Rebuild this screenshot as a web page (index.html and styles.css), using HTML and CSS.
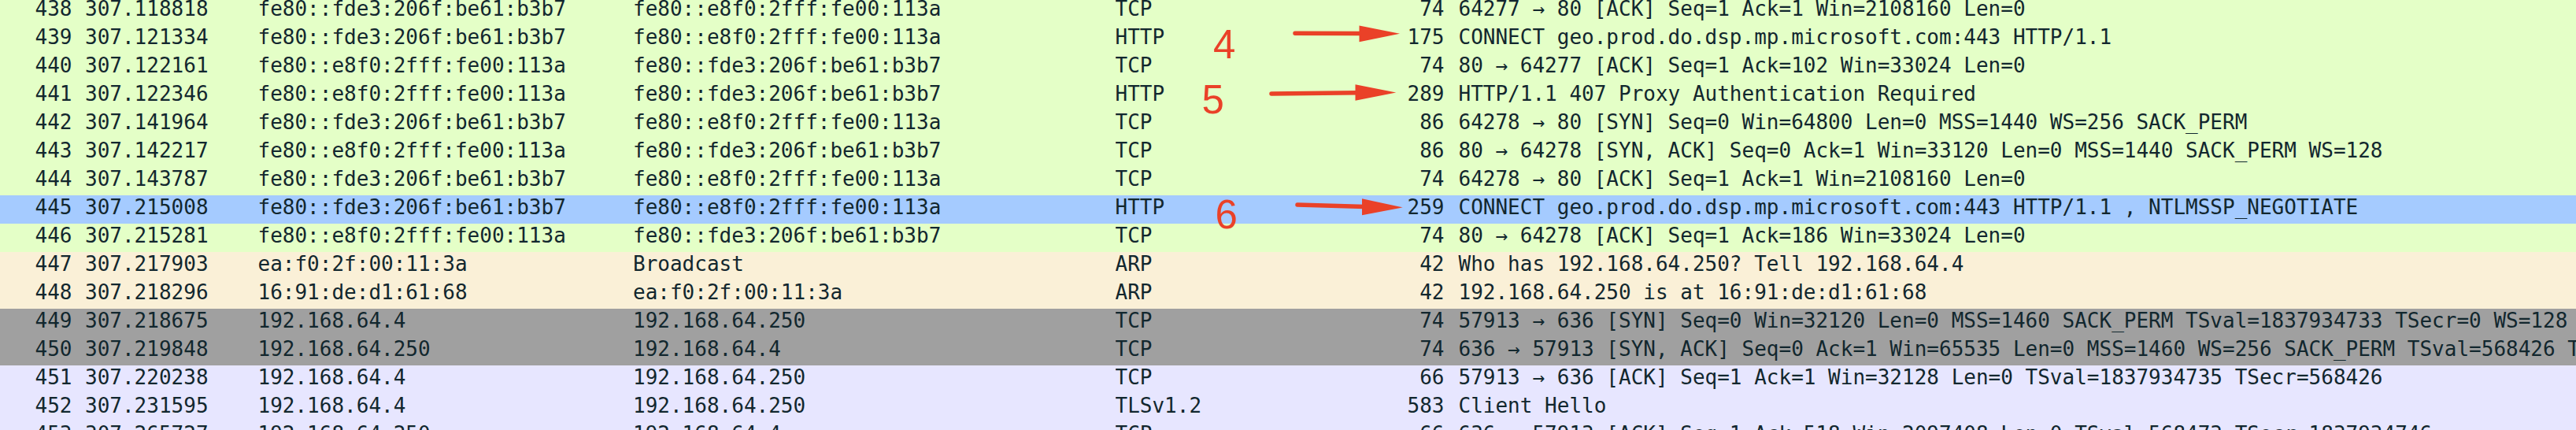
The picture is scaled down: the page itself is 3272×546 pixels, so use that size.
FILE: index.html
```html
<!DOCTYPE html>
<html lang="en">
<head>
<meta charset="utf-8">
<title>Packet list</title>
<link rel="stylesheet" href="styles.css">
</head>
<body>
<div class="capture">
  <div class="list">
    <div class="row c-http"><span class="no">438</span><span>307.118818</span><span>fe80::fde3:206f:be61:b3b7</span><span>fe80::e8f0:2fff:fe00:113a</span><span>TCP</span><span class="len">74</span><span class="info">64277 → 80 [ACK] Seq=1 Ack=1 Win=2108160 Len=0</span></div>
    <div class="row c-http"><span class="no">439</span><span>307.121334</span><span>fe80::fde3:206f:be61:b3b7</span><span>fe80::e8f0:2fff:fe00:113a</span><span>HTTP</span><span class="len">175</span><span class="info">CONNECT geo.prod.do.dsp.mp.microsoft.com:443 HTTP/1.1</span></div>
    <div class="row c-http"><span class="no">440</span><span>307.122161</span><span>fe80::e8f0:2fff:fe00:113a</span><span>fe80::fde3:206f:be61:b3b7</span><span>TCP</span><span class="len">74</span><span class="info">80 → 64277 [ACK] Seq=1 Ack=102 Win=33024 Len=0</span></div>
    <div class="row c-http"><span class="no">441</span><span>307.122346</span><span>fe80::e8f0:2fff:fe00:113a</span><span>fe80::fde3:206f:be61:b3b7</span><span>HTTP</span><span class="len">289</span><span class="info">HTTP/1.1 407 Proxy Authentication Required</span></div>
    <div class="row c-http"><span class="no">442</span><span>307.141964</span><span>fe80::fde3:206f:be61:b3b7</span><span>fe80::e8f0:2fff:fe00:113a</span><span>TCP</span><span class="len">86</span><span class="info">64278 → 80 [SYN] Seq=0 Win=64800 Len=0 MSS=1440 WS=256 SACK_PERM</span></div>
    <div class="row c-http"><span class="no">443</span><span>307.142217</span><span>fe80::e8f0:2fff:fe00:113a</span><span>fe80::fde3:206f:be61:b3b7</span><span>TCP</span><span class="len">86</span><span class="info">80 → 64278 [SYN, ACK] Seq=0 Ack=1 Win=33120 Len=0 MSS=1440 SACK_PERM WS=128</span></div>
    <div class="row c-http"><span class="no">444</span><span>307.143787</span><span>fe80::fde3:206f:be61:b3b7</span><span>fe80::e8f0:2fff:fe00:113a</span><span>TCP</span><span class="len">74</span><span class="info">64278 → 80 [ACK] Seq=1 Ack=1 Win=2108160 Len=0</span></div>
    <div class="row c-selected"><span class="no">445</span><span>307.215008</span><span>fe80::fde3:206f:be61:b3b7</span><span>fe80::e8f0:2fff:fe00:113a</span><span>HTTP</span><span class="len">259</span><span class="info">CONNECT geo.prod.do.dsp.mp.microsoft.com:443 HTTP/1.1 , NTLMSSP_NEGOTIATE</span></div>
    <div class="row c-http"><span class="no">446</span><span>307.215281</span><span>fe80::e8f0:2fff:fe00:113a</span><span>fe80::fde3:206f:be61:b3b7</span><span>TCP</span><span class="len">74</span><span class="info">80 → 64278 [ACK] Seq=1 Ack=186 Win=33024 Len=0</span></div>
    <div class="row c-arp"><span class="no">447</span><span>307.217903</span><span>ea:f0:2f:00:11:3a</span><span>Broadcast</span><span>ARP</span><span class="len">42</span><span class="info">Who has 192.168.64.250? Tell 192.168.64.4</span></div>
    <div class="row c-arp"><span class="no">448</span><span>307.218296</span><span>16:91:de:d1:61:68</span><span>ea:f0:2f:00:11:3a</span><span>ARP</span><span class="len">42</span><span class="info">192.168.64.250 is at 16:91:de:d1:61:68</span></div>
    <div class="row c-syn"><span class="no">449</span><span>307.218675</span><span>192.168.64.4</span><span>192.168.64.250</span><span>TCP</span><span class="len">74</span><span class="info">57913 → 636 [SYN] Seq=0 Win=32120 Len=0 MSS=1460 SACK_PERM TSval=1837934733 TSecr=0 WS=128</span></div>
    <div class="row c-syn"><span class="no">450</span><span>307.219848</span><span>192.168.64.250</span><span>192.168.64.4</span><span>TCP</span><span class="len">74</span><span class="info">636 → 57913 [SYN, ACK] Seq=0 Ack=1 Win=65535 Len=0 MSS=1460 WS=256 SACK_PERM TSval=568426 TSecr=1837934733</span></div>
    <div class="row c-tcp"><span class="no">451</span><span>307.220238</span><span>192.168.64.4</span><span>192.168.64.250</span><span>TCP</span><span class="len">66</span><span class="info">57913 → 636 [ACK] Seq=1 Ack=1 Win=32128 Len=0 TSval=1837934735 TSecr=568426</span></div>
    <div class="row c-tcp"><span class="no">452</span><span>307.231595</span><span>192.168.64.4</span><span>192.168.64.250</span><span>TLSv1.2</span><span class="len">583</span><span class="info">Client Hello</span></div>
    <div class="row c-tcp"><span class="no">453</span><span>307.265727</span><span>192.168.64.250</span><span>192.168.64.4</span><span>TCP</span><span class="len">66</span><span class="info">636 → 57913 [ACK] Seq=1 Ack=518 Win=2097408 Len=0 TSval=568473 TSecr=1837934746</span></div>
  </div>
  <svg class="marks" width="3272" height="546" viewBox="0 0 3272 546" xmlns="http://www.w3.org/2000/svg">
    <g class="arrow">
      <line x1="1645" y1="42.3" x2="1730" y2="42.6"/>
      <polygon points="1726.5,32.5 1778,42.7 1726.5,53.3"/>
      <line x1="1615" y1="119" x2="1725" y2="117.8"/>
      <polygon points="1721.5,107.3 1773.3,117.5 1721.5,127.7"/>
      <line x1="1648" y1="260" x2="1734" y2="262.5"/>
      <polygon points="1730,252.3 1781.7,263.3 1730,273.3"/>
    </g>
    <text class="num" x="1541" y="74">4</text>
    <text class="num" x="1526.5" y="143.5">5</text>
    <text class="num" x="1543.5" y="290.2">6</text>
  </svg>
</div>
</body>
</html>
```
FILE: styles.css
```css
html, body {
  margin: 0;
  padding: 0;
  background: #e7e6ff;
}

.capture {
  position: relative;
  width: 3272px;
  height: 546px;
  overflow: hidden;
}

.list {
  margin-top: -4px;
  display: flex;
  flex-direction: column;
}

.row {
  display: grid;
  grid-template-columns: 108px 219.5px 476.5px 612.5px 300px 118px 1fr;
  height: 36px;
  font-family: "DejaVu Sans Mono", "Liberation Mono", monospace;
  font-size: 26px;
  line-height: 30px;
  color: #12272e;
  white-space: nowrap;
  overflow: hidden;
}

.row > span {
  overflow: hidden;
  min-width: 0;
}

.row .no {
  text-align: right;
  padding-right: 16.5px;
}

.row .len {
  text-align: right;
}

.row .info {
  padding-left: 18px;
  overflow: hidden;
}

.c-http { background: #e4ffc7; }
.c-selected { background: #a5cbff; }
.c-arp { background: #faf0d7; }
.c-syn { background: #a0a0a0; }
.c-tcp { background: #e7e6ff; }

.marks {
  position: absolute;
  top: 0;
  left: 0;
  pointer-events: none;
}

.arrow line {
  stroke: #ea4128;
  stroke-width: 5.5;
  stroke-linecap: round;
}

.arrow polygon {
  fill: #ea4128;
}

.num {
  font-family: "Liberation Sans", Arial, sans-serif;
  font-size: 51px;
  fill: #ea4128;
}
```
